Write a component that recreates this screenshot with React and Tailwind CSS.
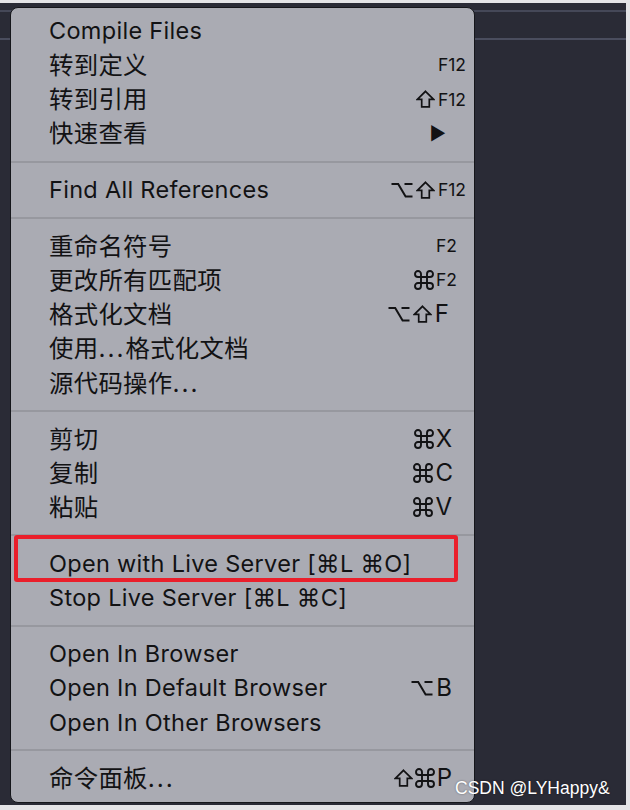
import React from 'react'

const FONT = { fontFamily: 'Inter, "Noto Sans CJK SC", sans-serif' }

// menu rows; sc = shortcut, end = px from menu's right edge where the shortcut ends
const groups = [
  [
    { label: 'Compile Files' },
    { label: '转到定义', sc: 'F12', end: 8 },
    { label: '转到引用', sc: '⇧F12', end: 8 },
    { label: '快速查看', sc: '▶', end: 28, arrow: true },
  ],
  [{ label: 'Find All References', sc: '⌥⇧F12', end: 8 }],
  [
    { label: '重命名符号', sc: 'F2', end: 17 },
    { label: '更改所有匹配项', sc: '⌘F2', end: 17 },
    { label: '格式化文档', sc: '⌥⇧F', end: 25 },
    { label: '使用...格式化文档' },
    { label: '源代码操作...' },
  ],
  [
    { label: '剪切', sc: '⌘X', end: 22 },
    { label: '复制', sc: '⌘C', end: 21 },
    { label: '粘贴', sc: '⌘V', end: 22 },
  ],
  [
    { label: 'Open with Live Server [⌘L ⌘O]', boxed: true },
    { label: 'Stop Live Server [⌘L ⌘C]' },
  ],
  [
    { label: 'Open In Browser' },
    { label: 'Open In Default Browser', sc: '⌥B', end: 22 },
    { label: 'Open In Other Browsers' },
  ],
  [{ label: '命令面板...', sc: '⇧⌘P', end: 22 }],
]

const CommandKey = () => (
  <svg width="18" height="18" viewBox="3 3 18 18" fill="none" stroke="currentColor" strokeWidth="1.9" overflow="visible">
    <path d="M15 6v12a3 3 0 1 0 3-3H6a3 3 0 1 0 3 3V6a3 3 0 1 0-3 3h12a3 3 0 1 0-3-3" />
  </svg>
)

const ShiftKey = () => (
  <svg width="19" height="18" viewBox="0 0 19 18" fill="none" stroke="currentColor" strokeWidth="1.7" strokeLinejoin="miter">
    <path d="M9.5 1.3 L17.6 9.4 H13.3 V16.8 H5.7 V9.4 H1.4 Z" />
  </svg>
)

const OptionKey = () => (
  <svg width="22" height="16" viewBox="0 0 22 16" fill="none" stroke="currentColor" strokeWidth="2">
    <path d="M0.5 2 H7.2 L14.6 14.5 H21.5" />
    <path d="M13.5 2 H21.5" />
  </svg>
)

function Shortcut({ text, arrow }) {
  if (arrow) return <span className="text-[18px] leading-none">▶</span>
  const parts = text.match(/[⌘⇧⌥]|F\d+|./g)
  return (
    <span className="flex items-center gap-[3px]">
      {parts.map((p, i) => {
        if (p === '⌘') return <CommandKey key={i} />
        if (p === '⇧') return <ShiftKey key={i} />
        if (p === '⌥') return <OptionKey key={i} />
        if (/^F\d/.test(p)) return <span key={i} className="text-[17.5px] leading-none">{p}</span>
        return <span key={i} className="text-[24px] leading-none">{p}</span>
      })}
    </span>
  )
}

const isCjk = s => /[\u4e00-\u9fff]/.test(s)

function Label({ text }) {
  if (!isCjk(text)) {
    return <span className="text-[23.5px] leading-none tracking-[0.3px]">{text}</span>
  }
  // CJK labels: wider glyphs, and the dots are spaced out like on macOS
  const parts = text.split('...')
  return (
    <span className="text-[24.4px] leading-none tracking-[0.3px]">
      {parts.map((p, i) => (
        <React.Fragment key={i}>
          {p}
          {i < parts.length - 1 && <span className="tracking-[2px]">...</span>}
        </React.Fragment>
      ))}
    </span>
  )
}

function Item({ item }) {
  return (
    <div className="relative flex h-[34.2px] items-center pl-[38px] text-[#121214]">
      {item.boxed && (
        <div className="absolute left-[3px] top-[-11px] h-[47px] w-[444px] rounded-[3px] border-[4px] border-[#ea1f2b]" />
      )}
      <Label text={item.label} />
      {item.sc && (
        <span className="absolute top-1/2 -translate-y-1/2" style={{ right: item.end }}>
          <Shortcut text={item.sc} arrow={item.arrow} />
        </span>
      )}
    </div>
  )
}

export default function App() {
  return (
    <div className="relative h-[810px] w-[630px] overflow-hidden bg-[#e4e4e7] pr-[4px] pt-[3px] pb-[5px]" style={FONT}>
      {/* editor behind the menu */}
      <div className="h-full w-full bg-[#2a2b36]">
        <div className="h-[7px]" />
        <div className="h-[2px] bg-[#454858]" />
        <div className="h-[26px]" />
        <div className="h-[2px] bg-[#4a4d5e]" />
      </div>

      {/* context menu */}
      <div className="absolute left-[10px] top-[7px] h-[796px] w-[465px] rounded-[8px] border border-[#15161b] bg-[#aaabb3] pt-[6px]">
        {groups.map((g, gi) => (
          <div key={gi}>
            {gi > 0 && (
              <div className="flex h-[22px] items-center">
                <div className="h-[2px] w-full bg-[#97989f]" />
              </div>
            )}
            {g.map((item, ii) => (
              <Item key={ii} item={item} />
            ))}
          </div>
        ))}
      </div>

      {/* watermark */}
      <div
        className="absolute left-[455px] top-[780px] text-[17.5px] leading-none text-white"
        style={{ fontFamily: '"Liberation Sans", Arial, sans-serif', textShadow: '0 0 2px rgba(0,0,0,0.45)' }}
      >
        CSDN @LYHappy&amp;
      </div>
    </div>
  )
}
